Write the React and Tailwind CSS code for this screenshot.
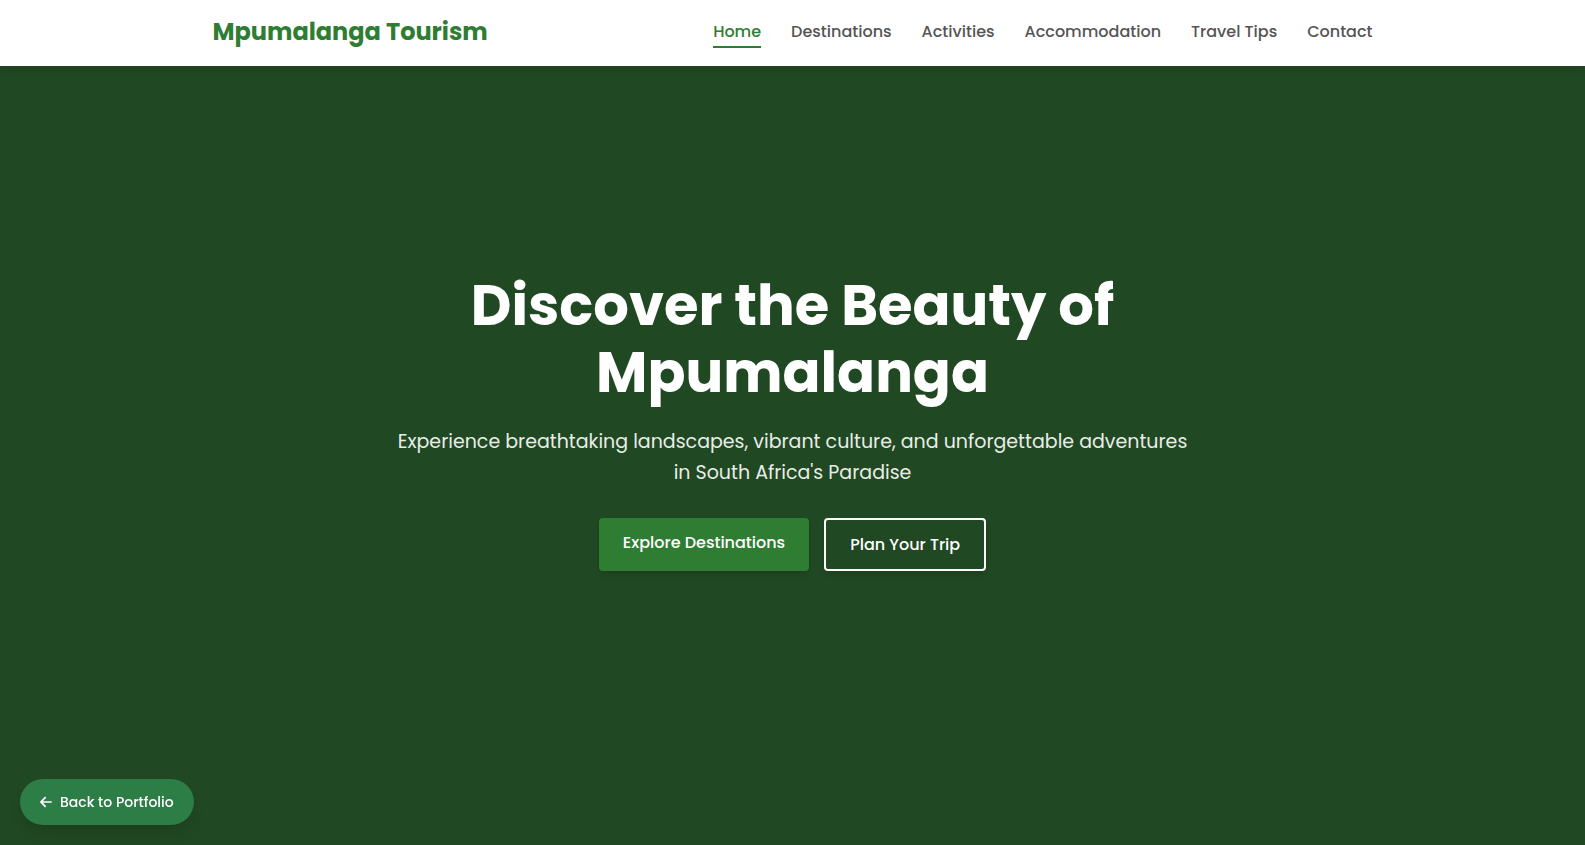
import { FaArrowLeft } from 'react-icons/fa6';

const links = ['Home', 'Destinations', 'Activities', 'Accommodation', 'Travel Tips', 'Contact'];

function Header() {
  return (
    <header className="sticky top-0 z-10 h-[66px] bg-white shadow-[0_2px_10px_rgba(0,0,0,0.1)]">
      <div className="mx-auto flex h-full max-w-[1200px] items-center justify-between px-5 pb-[2px]">
        <a href="#home" className="text-[24px] leading-8 font-bold whitespace-nowrap text-[#2e7d32]">
          Mpumalanga Tourism
        </a>
        <nav aria-label="Main">
          <ul className="flex gap-[30px]">
            {links.map((label, i) => (
              <li key={label}>
                <a
                  href={'#' + label.toLowerCase().replace(' ', '-')}
                  aria-current={i === 0 ? 'page' : undefined}
                  className={
                    'block border-y-2 border-t-transparent py-[2px] text-[16px] leading-6 font-medium whitespace-nowrap ' +
                    (i === 0 ? 'border-b-[#2e7d32] text-[#2e7d32]' : 'border-b-transparent text-[#555555]')
                  }
                >
                  {label}
                </a>
              </li>
            ))}
          </ul>
        </nav>
      </div>
    </header>
  );
}

function Hero() {
  return (
    <main className="-mt-[66px] flex min-h-screen items-center justify-center bg-[#204822] px-5 pb-[2px] text-center">
      <div className="max-w-[800px]">
        <h1 className="mb-5 text-[56px] leading-[67px] font-bold text-white">
          Discover the Beauty of Mpumalanga
        </h1>
        <p className="mb-[30px] text-[19px] leading-[31px] text-[#e9ede9]">
          Experience breathtaking landscapes, vibrant culture, and unforgettable adventures in South
          Africa&apos;s Paradise
        </p>
        <div className="flex justify-center gap-[15px] text-[16px] leading-[25px] font-medium text-white">
          <a href="#destinations" className="rounded-[4px] bg-[#2e7d32] px-6 py-3 shadow-md">
            Explore Destinations
          </a>
          <a href="#plan" className="rounded-[4px] border-2 border-white px-6 py-3 shadow-md">
            Plan Your Trip
          </a>
        </div>
      </div>
    </main>
  );
}

export default function App() {
  return (
    <div className="font-['Poppins','Inter',sans-serif]">
      <Header />
      <Hero />
      <a
        href="#portfolio"
        className="fixed bottom-5 left-5 z-20 flex items-center gap-2 rounded-full bg-[#2d7d46] px-5 py-3 text-[14px] leading-[22px] font-medium text-white shadow-lg"
      >
        <FaArrowLeft className="h-[14px] w-3" aria-hidden="true" />
        Back to Portfolio
      </a>
    </div>
  );
}
